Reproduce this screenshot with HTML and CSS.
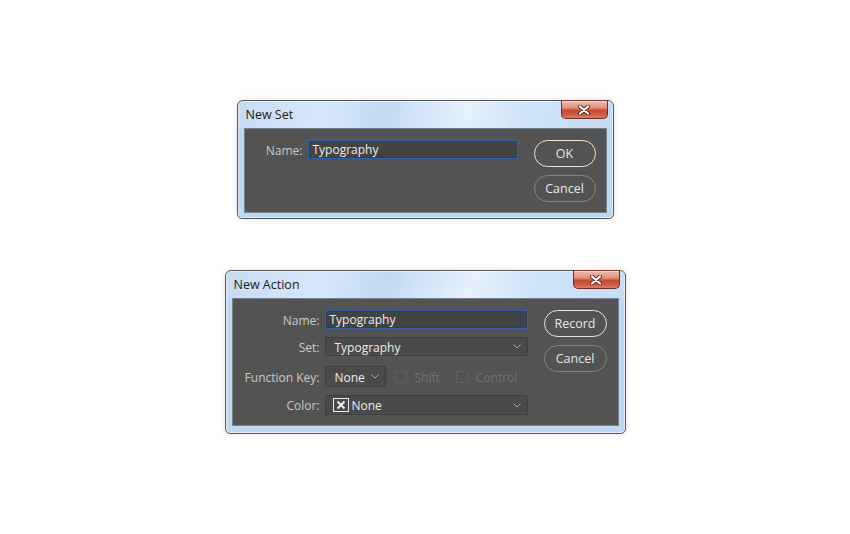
FILE: index.html
```html
<!DOCTYPE html>
<html lang="en">
<head>
<meta charset="utf-8">
<title>Dialogs</title>
<link rel="stylesheet" href="styles.css">
</head>
<body>
  <div class="window win-set">
    <div class="titlebar">
      <span class="title">New Set</span>
      <button class="close" aria-label="Close">
        <svg width="14" height="10" viewBox="0 0 14 10">
          <path d="M3 1.5 L11 8.5 M11 1.5 L3 8.5" stroke="#5a2a22" stroke-width="4" stroke-linecap="round"/>
          <path d="M3 1.5 L11 8.5 M11 1.5 L3 8.5" stroke="#ffffff" stroke-width="2.2" stroke-linecap="round"/>
        </svg>
      </button>
    </div>
    <div class="panel">
      <div class="form form-set">
        <label class="lbl">Name:</label>
        <div class="input focused">Typography</div>
      </div>
      <div class="buttons">
        <button class="btn primary">OK</button>
        <button class="btn">Cancel</button>
      </div>
    </div>
  </div>

  <div class="window win-action">
    <div class="titlebar">
      <span class="title">New Action</span>
      <button class="close" aria-label="Close">
        <svg width="14" height="10" viewBox="0 0 14 10">
          <path d="M3 1.5 L11 8.5 M11 1.5 L3 8.5" stroke="#5a2a22" stroke-width="4" stroke-linecap="round"/>
          <path d="M3 1.5 L11 8.5 M11 1.5 L3 8.5" stroke="#ffffff" stroke-width="2.2" stroke-linecap="round"/>
        </svg>
      </button>
    </div>
    <div class="panel">
      <div class="form form-action">
        <label class="lbl">Name:</label>
        <div class="input focused">Typography</div>

        <label class="lbl">Set:</label>
        <div class="select"><span class="sel-text">Typography</span><svg class="chev" width="8" height="5" viewBox="0 0 8 5"><polyline points="0.5,0.5 4,4 7.5,0.5" fill="none" stroke="#a8a8a8" stroke-width="1"/></svg></div>

        <label class="lbl">Function Key:</label>
        <div class="fkey-row">
          <div class="select small"><span class="sel-text">None</span><svg class="chev" width="8" height="5" viewBox="0 0 8 5"><polyline points="0.5,0.5 4,4 7.5,0.5" fill="none" stroke="#a8a8a8" stroke-width="1"/></svg></div>
          <span class="check"></span><span class="dis">Shift</span>
          <span class="check second"></span><span class="dis">Control</span>
        </div>

        <label class="lbl">Color:</label>
        <div class="select color"><span class="xbox"><svg width="10" height="10" viewBox="0 0 10 10"><path d="M1.5 1.5 L8.5 8.5 M8.5 1.5 L1.5 8.5" stroke="#f0f0f0" stroke-width="2"/></svg></span><span class="sel-text none">None</span><svg class="chev" width="8" height="5" viewBox="0 0 8 5"><polyline points="0.5,0.5 4,4 7.5,0.5" fill="none" stroke="#a8a8a8" stroke-width="1"/></svg></div>
      </div>
      <div class="buttons">
        <button class="btn primary wide">Record</button>
        <button class="btn wide">Cancel</button>
      </div>
    </div>
  </div>
</body>
</html>
```

FILE: styles.css
```css
html, body {
  margin: 0;
  padding: 0;
  background: #ffffff;
}
body {
  width: 850px;
  height: 534px;
  display: flex;
  flex-direction: column;
  align-items: center;
  padding-top: 100px;
  box-sizing: border-box;
  gap: 51px;
  font-family: "Open Sans", "Noto Sans", sans-serif;
  font-size: 12px;
}
.window {
  box-sizing: border-box;
  border: 1px solid #505860;
  border-radius: 6px 6px 5px 5px;
  background:
    linear-gradient(180deg, rgba(255,255,255,0) 0px, rgba(255,255,255,0) 27px, #bfd8f1 27px),
    linear-gradient(100deg, #c6dcf3 0%, #d6e7f9 22%, #c3daf3 38%, #e6f1fc 58%, #d0e4f8 72%, #c2daf3 100%);
  box-shadow: 0 0 6px rgba(0,0,0,0.12), inset 0 0 0 1px rgba(255,255,255,0.55);
  padding: 0 6px 6px;
}
.win-set { width: 377px; height: 119px; }
.win-action { width: 401px; height: 164px; }

.titlebar {
  height: 27px;
  display: flex;
  justify-content: space-between;
  align-items: flex-start;
}
.title {
  color: #1c1c1c;
  font-size: 12.5px;
  line-height: 14px;
  padding-top: 7px;
  padding-left: 2px;
}
.close {
  width: 47px;
  height: 19px;
  margin-top: -1px;
  margin-right: -1px;
  padding: 0;
  border: 1px solid #6a2f26;
  border-top-color: #7a3a30;
  border-radius: 0 0 5px 5px;
  background: linear-gradient(180deg, #eebcb0 0%, #de917e 40%, #c84a30 55%, #cc5c42 80%, #da7d64 100%);
  box-shadow: inset 0 1px 0 rgba(255,255,255,0.4);
  display: flex;
  align-items: center;
  justify-content: center;
}
.close svg { display: block; }

.panel {
  box-sizing: border-box;
  border: 1px solid #74838f;
  background: #535353;
  display: flex;
  padding: 11px 10px 9px 11px;
  gap: 16px;
}
.win-set .panel { height: 85px; }
.win-action .panel { height: 128px; }

.form {
  display: grid;
  column-gap: 5px;
  align-content: start;
}
.form-set {
  grid-template-columns: 47px 210px;
  grid-template-rows: 19px;
}
.form-action {
  grid-template-columns: 76px 203px;
  grid-template-rows: 19px 19px 23px 20px;
  row-gap: 8px;
}
.lbl {
  color: #c9c9c9;
  text-align: right;
  align-self: center;
  white-space: nowrap;
  line-height: 16px;
  padding-top: 2px;
}
.form-action .lbl:nth-of-type(3) { align-self: end; padding-bottom: 1px; }

.input {
  box-sizing: border-box;
  height: 19px;
  background: #434343;
  border: 1px solid #2f62a8;
  box-shadow: inset 0 0 0 1px #2a3f5c;
  color: #ececec;
  padding-left: 4px;
  padding-top: 1px;
  line-height: 16px;
}
.select {
  box-sizing: border-box;
  height: 19px;
  background: #4a4a4a;
  border: 1px solid #3f3f3f;
  border-radius: 2px;
  box-shadow: inset 0 -1px 0 rgba(255,255,255,0.04);
  display: flex;
  align-items: center;
  padding: 0 6px 0 9px;
  color: #ececec;
}
.sel-text { flex: 1; line-height: 16px; padding-top: 2px; }
.chev { display: block; flex: none; }

.fkey-row {
  display: flex;
  align-items: center;
  align-self: end;
  height: 21px;
}
.select.small {
  width: 61px;
  height: 21px;
  flex: none;
}
.check {
  box-sizing: border-box;
  width: 12px;
  height: 12px;
  border: 1px solid #5f5f5f;
  border-radius: 1px;
  background: #515151;
  margin-left: 9px;
  margin-right: 8px;
  flex: none;
}
.check.second { margin-left: 16px; }
.dis { color: #727272; line-height: 16px; padding-top: 2px; }

.select.color { height: 20px; padding-left: 7px; }
.xbox {
  box-sizing: border-box;
  width: 16px;
  height: 14px;
  border: 1px solid #eaeaea;
  display: flex;
  align-items: center;
  justify-content: center;
  margin-right: 3px;
  flex: none;
}
.xbox svg { display: block; }

.buttons {
  display: flex;
  flex-direction: column;
  gap: 8px;
}
.btn {
  box-sizing: border-box;
  width: 62px;
  height: 27px;
  border-radius: 14px;
  border: 1px solid #858585;
  background: transparent;
  color: #e6e6e6;
  font-family: "Open Sans", "Noto Sans", sans-serif;
  font-size: 12.5px;
  padding: 0;
}
.btn.primary {
  border: 1.5px solid #e4e4e4;
}
.btn.wide { width: 63px; }
```
